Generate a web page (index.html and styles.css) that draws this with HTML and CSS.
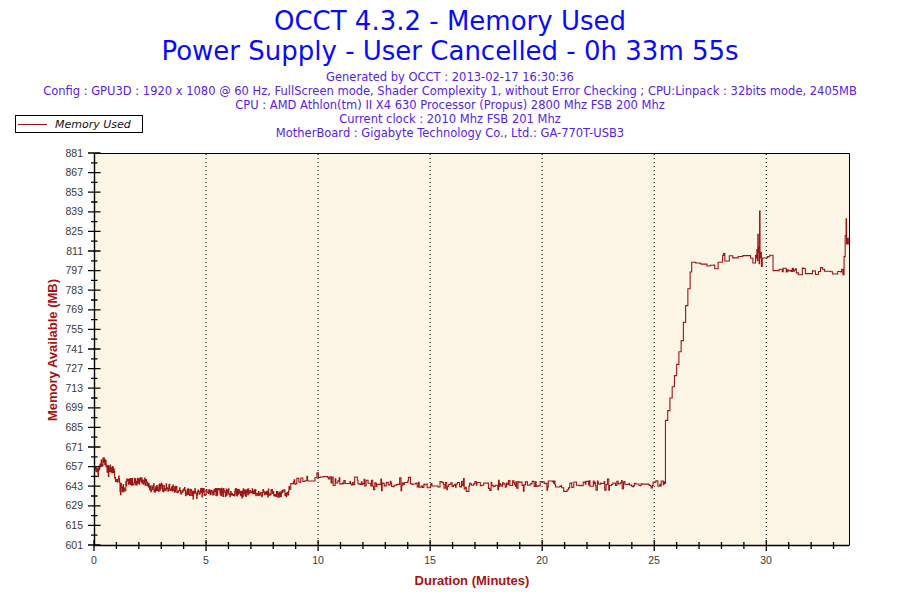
FILE: index.html
```html
<!DOCTYPE html>
<html>
<head>
<meta charset="utf-8">
<title>OCCT 4.3.2 - Memory Used</title>
<link rel="stylesheet" href="styles.css">
</head>
<body>
<div class="page">
  <header class="header">
    <h1 class="title">OCCT 4.3.2 - Memory Used</h1>
    <h2 class="title">Power Supply - User Cancelled - 0h 33m 55s</h2>
    <div class="info">
      <p>Generated by OCCT : 2013-02-17 16:30:36</p>
      <p>Config : GPU3D : 1920 x 1080 @ 60 Hz, FullScreen mode, Shader Complexity 1, without Error Checking ; CPU:Linpack : 32bits mode, 2405MB</p>
      <p>CPU : AMD Athlon(tm) II X4 630 Processor (Propus) 2800 Mhz FSB 200 Mhz</p>
      <p>Current clock : 2010 Mhz FSB 201 Mhz</p>
      <p>MotherBoard : Gigabyte Technology Co., Ltd.: GA-770T-USB3</p>
    </div>
  </header>
  <div class="legend"><span class="legend-line"></span><span class="legend-label">Memory Used</span></div>
  <svg class="chart" width="900" height="460" viewBox="0 0 900 460">
    <rect class="plot-bg" x="94" y="13" width="755.5" height="392"/>
    <path id="grid" class="grid" d=""/>
    <path id="series" class="series" d=""/>
    <path class="frame" d="M94 13.5 H849.5 V405"/>
    <path class="axis" d="M94.5 13 V405.5 H849.5"/>
    <path id="ticks" class="ticks" d=""/>
    <g class="ylabels">
      <text x="83" y="408.5">601</text>
      <text x="83" y="388.9">615</text>
      <text x="83" y="369.3">629</text>
      <text x="83" y="349.7">643</text>
      <text x="83" y="330.1">657</text>
      <text x="83" y="310.5">671</text>
      <text x="83" y="290.9">685</text>
      <text x="83" y="271.3">699</text>
      <text x="83" y="251.7">713</text>
      <text x="83" y="232.1">727</text>
      <text x="83" y="212.5">741</text>
      <text x="83" y="192.9">755</text>
      <text x="83" y="173.3">769</text>
      <text x="83" y="153.7">783</text>
      <text x="83" y="134.1">797</text>
      <text x="83" y="114.5">811</text>
      <text x="83" y="94.9">825</text>
      <text x="83" y="75.3">839</text>
      <text x="83" y="55.7">853</text>
      <text x="83" y="36.1">867</text>
      <text x="83" y="16.5">881</text>
    </g>
    <g class="xlabels">
      <text x="94" y="424">0</text>
      <text x="206" y="424">5</text>
      <text x="318" y="424">10</text>
      <text x="430" y="424">15</text>
      <text x="542" y="424">20</text>
      <text x="654" y="424">25</text>
      <text x="766" y="424">30</text>
    </g>
    <text class="axis-title" x="472" y="445">Duration (Minutes)</text>
    <text class="axis-title" transform="translate(57 210) rotate(-90)">Memory Available (MB)</text>
  </svg>
</div>
<script src="chart.js"></script>
</body>
</html>
```

FILE: styles.css
```css
html, body {
  margin: 0;
  padding: 0;
  background: #ffffff;
}
.page {
  position: relative;
  width: 900px;
  height: 600px;
  overflow: hidden;
  background: #ffffff;
}
.header {
  height: 140px;
  box-sizing: border-box;
  padding-top: 6px;
  text-align: center;
}
.title {
  margin: 0;
  font-family: "DejaVu Sans", Verdana, sans-serif;
  font-size: 26px;
  font-weight: normal;
  line-height: 30px;
  color: #0a0aff;
}
.info {
  margin-top: 4px;
  font-family: "DejaVu Sans", Verdana, sans-serif;
  font-size: 11.5px;
  line-height: 14px;
  color: #5522ee;
}
.info p {
  margin: 0;
  white-space: nowrap;
}
.legend {
  position: absolute;
  left: 15px;
  top: 115px;
  width: 124px;
  height: 16px;
  border: 1px solid #000000;
  background: #ffffff;
  display: flex;
  align-items: center;
  gap: 8px;
  padding-left: 2px;
}
.legend-line {
  width: 29px;
  height: 1px;
  background: #9a1414;
}
.legend-label {
  font-family: "DejaVu Sans", Verdana, sans-serif;
  font-size: 11px;
  font-style: italic;
  color: #111111;
}
.chart {
  display: block;
}
.plot-bg {
  fill: #fdf6e7;
}
.frame {
  fill: none;
  stroke: #000000;
  stroke-width: 1;
}
.axis {
  fill: none;
  stroke: #000000;
  stroke-width: 1.4;
}
.ticks {
  fill: none;
  stroke: #000000;
  stroke-width: 1.3;
}
.grid {
  fill: none;
  stroke: #000000;
  stroke-width: 1;
  stroke-dasharray: 1 3;
}
.series {
  fill: none;
  stroke: #9e1515;
  stroke-width: 1.1;
}
.ylabels text {
  font-family: "Liberation Sans", Arial, sans-serif;
  font-size: 10.5px;
  fill: #3a3a3a;
  text-anchor: end;
}
.xlabels text {
  font-family: "Liberation Sans", Arial, sans-serif;
  font-size: 10.5px;
  fill: #3a3a3a;
  text-anchor: middle;
}
.axis-title {
  font-family: "Liberation Sans", Arial, sans-serif;
  font-size: 13px;
  font-weight: bold;
  fill: #a81212;
  text-anchor: middle;
}
```

FILE: chart.js
```js
(function () {
  var X0 = 94, PX = 22.41, Y0 = 405, PY = 1.4;
  function X(t) { return X0 + t * PX; }
  function Y(v) { return Y0 - (v - 601) * PY; }
  var s = 987654;
  function r() { s = (s * 16807) % 2147483647; return (s - 1) / 2147483646; }

  // ticks and grid
  var tk = '', gr = '';
  for (var k = 0; k <= 20; k++) {
    var y = Y(601 + 14 * k);
    tk += 'M88 ' + y + ' H100.5 ';
    if (k < 20) { var ym = y - 9.8; tk += 'M91 ' + ym + ' H97.5 '; }
  }
  for (var m = 0; m <= 33; m++) {
    var x = X(m);
    if (m % 5 === 0) {
      tk += 'M' + x + ' 400 V411 ';
      if (m > 0) gr += 'M' + x + ' 14 V405 ';
    } else {
      tk += 'M' + x + ' 402 V409 ';
    }
  }
  document.getElementById('ticks').setAttribute('d', tk);
  document.getElementById('grid').setAttribute('d', gr);

  function interp(arr, t) {
    for (var i = 1; i < arr.length; i++) {
      if (t <= arr[i][0]) {
        var a = arr[i - 1], b = arr[i];
        return a[1] + (b[1] - a[1]) * (t - a[0]) / (b[0] - a[0]);
      }
    }
    return arr[arr.length - 1][1];
  }

  var base1 = [[0, 653], [0.2, 656], [0.3, 660], [0.5, 661], [0.55, 656], [0.88, 655],
    [0.92, 648], [1.1, 648], [1.15, 642], [1.4, 642], [1.45, 646], [2.4, 646.5],
    [2.45, 642], [3.5, 642], [3.6, 640], [4.1, 639], [6, 638.5], [8.55, 638], [8.7, 640]];
  var base2 = [[8.7, 640], [8.85, 646], [9.2, 647], [9.6, 649], [10, 650.5], [10.3, 648],
    [11.5, 646], [13, 644.5], [15, 644], [18, 645], [20, 644.5], [20.85, 644.5],
    [20.9, 642], [21.2, 643.5], [22, 645], [25.45, 645]];
  var base3 = [[26.67, 803], [27.1, 802], [27.4, 800], [27.8, 803], [28.1, 808],
    [28.5, 807], [29.5, 806]];
  var base4 = [[30.35, 797], [31, 797.5], [32, 798], [33.3, 797.5]];

  var pts = [];
  var t = 0, v;
  while (t < 8.7) {
    v = interp(base1, t) + (r() - 0.5) * 6;
    if (r() < 0.05) v -= 3;
    pts.push([t, v]);
    t += 0.02;
  }
  var cur = interp(base2, t);
  while (t < 25.45) {
    if (r() < 0.45) {
      cur = interp(base2, t) + (r() - 0.5) * 4.5;
      if (r() < 0.12) cur -= 3;
      if (r() < 0.06) cur += 3;
    }
    pts.push([t, cur]);
    t += 0.03;
  }
  var rise = [[25.47, 645], [25.5, 690], [25.6, 697], [25.7, 706], [25.8, 714],
    [25.9, 722], [26.0, 730], [26.1, 739], [26.2, 747], [26.3, 760], [26.4, 772],
    [26.5, 784], [26.6, 796], [26.67, 803]];
  pts = pts.concat(rise);
  t = 26.7; cur = 803;
  while (t < 29.5) {
    if (r() < 0.3) {
      cur = interp(base3, t) + (r() - 0.5) * 2.5;
      if (r() < 0.1) cur -= 3;
    }
    pts.push([t, cur]);
    t += 0.05;
  }
  var spike = [[29.52, 808], [29.56, 806], [29.58, 812], [29.6, 804], [29.62, 823],
    [29.64, 810], [29.66, 814], [29.68, 802], [29.7, 839.5], [29.72, 806],
    [29.75, 810], [29.78, 800], [29.82, 806], [29.95, 806], [30.05, 807],
    [30.15, 808], [30.25, 808], [30.3, 797]];
  pts = pts.concat(spike);
  t = 30.35; cur = 797;
  while (t < 33.3) {
    if (r() < 0.4) {
      cur = interp(base4, t) + (r() - 0.5) * 3;
      if (r() < 0.12) cur -= 2.5;
    }
    pts.push([t, cur]);
    t += 0.045;
  }
  var end = [[33.32, 796], [33.36, 798], [33.42, 794], [33.47, 807], [33.52, 822],
    [33.56, 834], [33.58, 816], [33.62, 820], [33.66, 816], [33.71, 816]];
  pts = pts.concat(end);

  var d = 'M' + X(pts[0][0]).toFixed(2) + ' ' + Y(pts[0][1]).toFixed(2);
  for (var i = 1; i < pts.length; i++) {
    d += ' H' + X(pts[i][0]).toFixed(2) + ' V' + Y(pts[i][1]).toFixed(2);
  }
  document.getElementById('series').setAttribute('d', d);
})();
```
